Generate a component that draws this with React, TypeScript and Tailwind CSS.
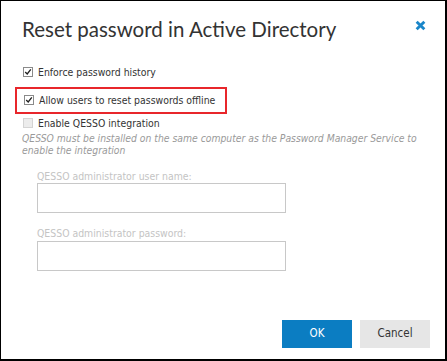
import { useState } from "react";

function Check({ checked, disabled }: { checked?: boolean; disabled?: boolean }) {
  return (
    <span
      className={`flex h-[10px] w-[10px] shrink-0 items-center justify-center border ${
        disabled ? "border-[#d4d4d4] bg-[#ececec]" : "border-[#8a8a8a] bg-white"
      }`}
    >
      {checked && (
        <svg viewBox="0 0 10 10" className="h-[8px] w-[8px]">
          <path d="M1.5 5 L4 7.5 L8.5 1.8" fill="none" stroke="#222" strokeWidth="1.7" />
        </svg>
      )}
    </span>
  );
}

export default function App() {
  const [history, setHistory] = useState(true);
  const [offline, setOffline] = useState(true);

  return (
    <div className="flex h-[361px] w-[447px] flex-col border border-r-2 border-b-2 border-black bg-white font-['DejaVu_Sans_Condensed','Liberation_Sans',sans-serif]">
      <div className="flex items-start justify-between pl-[21px] pr-[19px] pt-[14px]">
        <h1 className="font-['Lato','Open_Sans',sans-serif] text-[20.5px] leading-[28px] text-[#333]">
          Reset password in Active Directory
        </h1>
        <button className="mt-[5px]" aria-label="Close">
          <svg viewBox="0 0 10 10" className="h-[11px] w-[11px]">
            <path d="M1.5 1.5 L8.5 8.5 M8.5 1.5 L1.5 8.5" stroke="#1a86c9" strokeWidth="2.6" />
          </svg>
        </button>
      </div>

      <div className="mt-[22px] px-[21px] text-[10.4px] text-[#333]">
        <label className="flex items-center gap-[5px] pl-[1px] leading-[14px]" onClick={() => setHistory(!history)}>
          <Check checked={history} />
          <span>Enforce password history</span>
        </label>

        <div className="-ml-[7px] mt-[8px] w-fit border-2 border-[#e8262b] pb-[5px] pl-[6px] pr-[10px] pt-[4px]">
          <label className="flex items-center gap-[5px] pl-[1px] leading-[14px]" onClick={() => setOffline(!offline)}>
            <Check checked={offline} />
            <span>Allow users to reset passwords offline</span>
          </label>
        </div>

        <label className="mt-[2px] flex items-center gap-[5px] pl-[1px] leading-[14px]">
          <Check disabled />
          <span>Enable QESSO integration</span>
        </label>
        <p className="mt-[2px] text-[10.3px] italic leading-[12px] text-[#9a9a9a]">
          QESSO must be installed on the same computer as the Password Manager Service to enable the integration
        </p>

        <div className="mt-[14px] pl-[15px] text-[#c4c4c4]">
          <div className="leading-[12px]">QESSO administrator user name:</div>
          <input disabled className="mt-[1px] block h-[30px] w-[249px] border border-[#c8c8c8] bg-white" />
          <div className="mt-[14px] leading-[12px]">QESSO administrator password:</div>
          <input disabled type="password" className="mt-[2px] block h-[30px] w-[249px] border border-[#c8c8c8] bg-white" />
        </div>
      </div>

      <div className="mt-auto flex justify-end gap-[8px] pb-[11px] pr-[15px]">
        <button className="h-[28px] w-[70px] bg-[#0b7dc2] text-[11.5px] text-white">OK</button>
        <button className="h-[28px] w-[70px] bg-[#e6e6e6] text-[11.5px] text-[#333]">Cancel</button>
      </div>
    </div>
  );
}
